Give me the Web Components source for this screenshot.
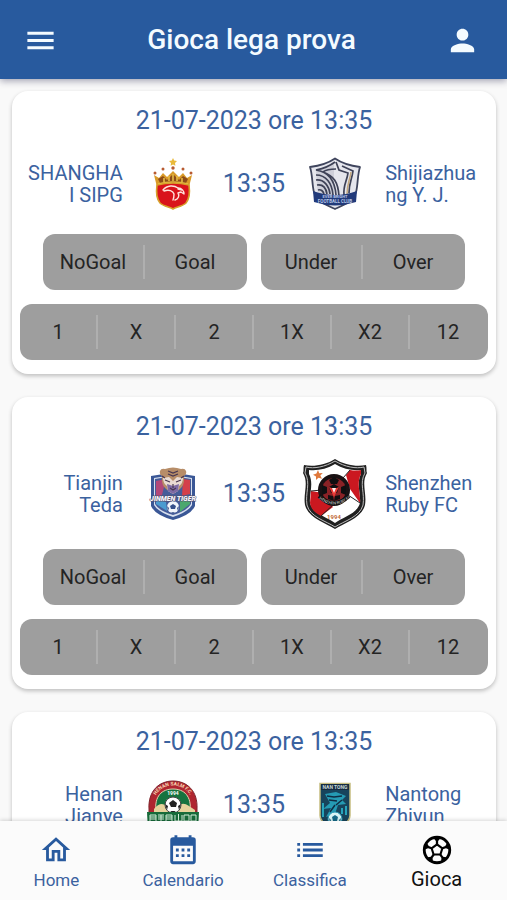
<!DOCTYPE html>
<html lang="it">
<head>
<meta charset="utf-8">
<meta name="viewport" content="width=device-width, initial-scale=1">
<title>Gioca lega prova</title>
<style>
  :root {
    --blue: #285a9e;
    --ink: #3b629f;
    --page: #f9f9f9;
  }
  body {
    margin: 0;
    height: 100vh;
    display: flex;
    flex-direction: column;
    background: var(--page);
    color: var(--ink);
    font-family: Roboto, "Liberation Sans", sans-serif;
  }
  main {
    flex: 1;
    min-height: 0;
    overflow: hidden auto;
    scrollbar-width: none;
    display: flex;
    flex-direction: column;
    gap: 23px;
    padding: 12px 11px 12px 12px;
  }
</style>
</head>
<body>

<app-bar>Gioca lega prova</app-bar>

<main>
  <match-card time="13:35" home="shanghai" away="shijiazhuang">
    <span slot="date">21-07-2023 ore 13:35</span>
    <span slot="home">SHANGHAI SIPG</span>
    <span slot="away">Shijiazhuang Y. J.</span>
  </match-card>
  <match-card time="13:35" home="tianjin" away="shenzhen">
    <span slot="date">21-07-2023 ore 13:35</span>
    <span slot="home">Tianjin Teda</span>
    <span slot="away">Shenzhen Ruby FC</span>
  </match-card>
  <match-card time="13:35" home="henan" away="nantong">
    <span slot="date">21-07-2023 ore 13:35</span>
    <span slot="home">Henan Jianye</span>
    <span slot="away">Nantong Zhiyun</span>
  </match-card>
</main>

<tab-bar>
  <tab-item icon="home">Home</tab-item>
  <tab-item icon="calendar">Calendario</tab-item>
  <tab-item icon="list">Classifica</tab-item>
  <tab-item icon="ball" active>Gioca</tab-item>
</tab-bar>

<script>
const ICONS = {
  menu: '<path d="M3 18h18v-2H3v2zm0-5h18v-2H3v2zm0-7v2h18V6H3z"/>',
  person: '<path d="M12 12c2.21 0 4-1.79 4-4s-1.79-4-4-4-4 1.79-4 4 1.790 4 4 4zm0 2c-2.670 0-8 1.340-8 4v2h16v-2c0-2.660-5.330-4-8-4z"/>',
  home: '<path d="M12 5.690l5 4.500V18h-2v-6H9v6H7v-7.810l5-4.500M12 3L2 12h3v8h6v-6h2v6h6v-8h3L12 3z"/>',
  calendar: '<path fill-rule="evenodd" d="M5 3h1V1.500h2V3h8V1.500h2V3h1a2 2 0 0 1 2 2v15a2 2 0 0 1-2 2H5a2 2 0 0 1-2-2V5a2 2 0 0 1 2-2zM5 9v11h14V9zM7 11h2v2H7zm4 0h2v2h-2zm4 0h2v2h-2zM7 15h2v2H7zm4 0h2v2h-2zm4 0h2v2h-2z"/>',
  list: '<path d="M3 13h2v-2H3v2zm0 4h2v-2H3v2zm0-8h2V7H3v2zm4 4h14v-2H7v2zm0 4h14v-2H7v2zM7 7v2h14V7H7z"/>',
  ball: `<circle cx="12" cy="12" r="9" fill="none" stroke="currentColor" stroke-width="2"/>
    <path fill="none" stroke="currentColor" stroke-width="1.500" stroke-linejoin="round" d="M12 8l3.800 2.800-1.400 4.400H9.600L8.200 10.800z"/>
    ${[0, 72, 144, 216, 288].map(a => `<path transform="rotate(${a} 12 12)" d="M9.300 3.400h5.400L12.800 5.600V8h-1.600V5.600z"/>`).join('')}`
};

const icon = (name, size) =>
  `<svg viewBox="0 0 24 24" width="${size}" height="${size}" fill="currentColor" aria-hidden="true">${ICONS[name]}</svg>`;

// Club crests, each on its own small canvas
const CRESTS = {
  shanghai: { size: 54, art: `
    <path fill="#e9b93a" d="M27 1l1.200 2.500 2.800.4-2 2 .4 2.800-2.400-1.300-2.400 1.300.4-2.800-2-2 2.800-.4z"/>
    <path fill="#d99a28" d="M8 18l5 3 4-5 4 4 6-6 6 6 4-4 4 5 5-3-3 12H11z"/>
    <path fill="#8d4c18" d="M12 22l5-3 4 4 6-6 6 6 4-4 5 3-2 4H14z"/>
    <path fill="none" stroke="#e6bd45" stroke-width="1.600" d="M12 27q15-4 30 0M18 25v-4M23 24v-5M27 24v-7M31 24v-5M36 25v-4"/>
    <g fill="#b85a30"><circle cx="9" cy="16" r="1.500"/><circle cx="17" cy="12" r="1.500"/><circle cx="27" cy="11" r="1.700"/><circle cx="37" cy="12" r="1.500"/><circle cx="45" cy="16" r="1.500"/></g>
    <path fill="#d9131b" stroke="#d7a12c" stroke-width="1.600" d="M11 28q16-4 32 0c1 7 1 13-3 18-3 3-9 4-13 6-4-2-10-3-13-6-4-5-4-11-3-18z"/>
    <path fill="none" stroke="#ffe4dc" stroke-width="1.400" stroke-linecap="round" stroke-linejoin="round" d="M17 33c4-5 11-5 15-2 4 0 6 3 6 6l-3-2-3 1c2 3 0 6-3 7M18 34c5-2 9 0 10 3 0 2 0 4-1 6M32 32l4 1"/>` },
  shijiazhuang: { size: 54, art: `
    <path fill="#e5e6ed" stroke="#3f455d" stroke-width="1.800" stroke-linejoin="round" d="M27 1.500C19 7 10 9 2 10c2 6 2 12 3 20 1 14 13 18 22 22 9-4 21-8 22-22 1-8 1-14 3-20-8-1-17-3-25-8.500z"/>
    <path fill="#cfd0da" d="M8 14l18-8v34H10z"/>
    <g fill="none" stroke="#3e4257" stroke-width="1.700">
      <path d="M27 5c-8 6-14 7-19 8 14 2 19 12 20 25M28 12c-5 0-9 0-13 3 11 4 15 10 16 24"/>
      <path d="M8 18c10 0 16 8 17 20M8 23c8-1 13 6 14 14M9 28c6-1 9 3 10 9M10 33c3-1 5 1 6 4"/>
      <path d="M28 5l3 8 9 3c-1 8-5 12-4 22M34 9l11 5c-1 8-4 12-4 22"/>
    </g>
    <path fill="none" stroke="#c3a77d" stroke-width="1.500" d="M43 15c-1 8-4 12-4 22"/>
    <path fill="#213a7a" d="M5 34q22 8 44 0l-1 11q-21 7-42 0z"/>
    <g fill="#b9c7e8" font-family="Roboto, sans-serif" font-weight="700" text-anchor="middle">
      <text x="27" y="41" font-size="4">EVER BRIGHT</text><text x="27" y="46" font-size="4.500">FOOTBALL CLUB</text>
    </g>` },
  tianjin: { size: 54, art: `
    <path fill="#3a5796" d="M5 9q22-5 44 0v30q-4 9-22 14Q9 48 5 39z"/>
    <path fill="#d8e0ee" d="M8 11q19-4 38 0v27q-4 7-19 12Q12 45 8 38z"/>
    <path fill="#465c99" d="M9 12q18-4 36 0v25q-4 7-18 11-14-4-18-11z"/>
    <path fill="#b24879" d="M10 14l10-2-4 16-6 2z"/>
    <path fill="#d43f4a" d="M37 12l7 1v14l-8 2z"/>
    <path fill="#4ba86e" d="M34 34l10-4v7l-10 8z"/>
    <path fill="#4a9bd0" d="M10 32l10 3 1 9-11-7z"/>
    <path fill="#b78d68" d="M14 4q1-3 5-2 8-3 16 0 4-1 5 2t-2 5q1 9-4 13l-7 5-7-5q-5-4-4-13-3-2-2-5z"/>
    <path fill="#e9dbd3" d="M17 11l6-1 4 4 4-4 6 1q0 5-4 8l-1 5-5 3-5-3-1-5q-4-3-4-8z"/>
    <path fill="#7d6aa4" d="M21 17l6 2 6-2-1 7-5 3-5-3z"/>
    <path fill="none" stroke="#483750" stroke-width="1.200" d="M22 4l5 2 5-2M22 7l5 2 5-2M19 13l5 2M35 13l-5 2M16 9l3 2M38 9l-3 2M24 21l3 2 3-2M27 17v4"/>
    <circle cx="27" cy="40" r="6" fill="#f2f5fb"/>
    <path fill="#354e89" d="M27 37l3 2-1 3h-4l-1-3zM21 39l2 2-1 3zM33 39l-2 2 1 3zM25 45h4l-2 1z"/>
    <text x="27" y="34" fill="#f5f5fa" stroke="#57516d" stroke-width="1" paint-order="stroke" font-family="Roboto, sans-serif" font-size="7" font-style="italic" font-weight="900" text-anchor="middle">JINMEN TIGER</text>` },
  shenzhen: { size: 70, art: `
    <path fill="#202020" d="M35 0C26 6 13 8 4 6 3 9 4 12 3 14c6 10 0 20 2 32 3 13 21 18 30 24 9-6 27-11 30-24 2-12-4-22 2-32-1-2 0-5-1-8-9 2-22 0-31-6z"/>
    <path fill="none" stroke="#bdbdbd" stroke-width="1" d="M35 2C25 8 14 10 6 8l-1 6c6 10 0 20 2 32 3 12 19 16 28 22 9-6 25-10 28-22 2-12-4-22 2-32l-1-6C56 10 45 8 35 2z"/>
    <path fill="#fff" d="M35 5C27 10 17 12 9 11v4c5 10 0 20 1 29 3 11 17 14 25 20 8-6 22-9 25-20 1-9-4-19 1-29v-4c-8 1-18-1-26-6z"/>
    <path fill="#cb1820" d="M50 11q6 1 11 0v4c-5 10 0 20-1 29L50 30 46 16zM11 32l12 2 10 14-12 9c-6-3-10-7-11-13z"/>
    <path fill="none" stroke="#222" d="M50 11l-7 8M11 32l11-1M60 44L48 36M21 57l13-12"/>
    <circle cx="34" cy="31" r="16" fill="#191113"/>
    <circle cx="34" cy="31" r="12" fill="#8a2226"/>
    <path fill="#100f11" d="M34 18l5 3-2 4h-6l-2-4zM22 26l5 2v6l-5 2zM46 26l-5 2v6l5 2zM28 36l5 1 1 5-6-2zM40 36l-5 1-1 5 6-2zM29 28l5-3 5 3-2 6h-6z"/>
    <path fill="#e93a35" d="M29 28l5 2 5-2-2 4-3 6-3-6z"/>
    <path fill="#fff0ef" d="M32 29h4l-2 5z"/>
    <path fill="none" stroke="#111" stroke-width="4" d="M19 37q15 14 30 0"/>
    <path id="band" fill="none" d="M18 39q16 13 32 0"/>
    <path fill="#df783c" d="M18 11l1.200 3.300 3.600-.3-2.500 2.500 1.700 3.200-3.500-1-2.500 2.300v-3.400l-3-1.800 3.400-1.300z"/>
    <text fill="#ddd" font-family="Roboto, sans-serif" font-size="4"><textPath href="#band" startOffset="50%" text-anchor="middle">SHENZHEN RUBY FC</textPath></text>
    <text x="34" y="60" fill="#bf6c3c" font-family="Roboto, sans-serif" font-size="6" font-weight="700" text-anchor="middle">1994</text>` },
  henan: { size: 54, art: `
    <path fill="#af2630" stroke="#7e272e" d="M3 31C2 13 13 3 27 3s25 10 24 28v6H3z"/>
    <path fill="#16733f" stroke="#e8cfb0" stroke-width="1" d="M10 34C8 18 16 11 27 11s19 7 17 23z"/>
    <path fill="#e6d39c" d="M8 31q7-9 14-2h9q5-6 12-1l6 4v4H8z"/>
    <circle cx="27" cy="27" r="8" fill="#fff" stroke="#444"/>
    <path fill="#222" d="M27 22l4 3-1 4h-5l-2-4zM19 26l3 2-1 4zM35 26l-3 2 1 4zM24 33h6l-3 2z"/>
    <path fill="#176b3a" d="M1 34h52l-1 19H2z"/>
    <path id="arc" fill="none" d="M7 27C9 1 45 1 47 27"/>
    <text fill="#f6d6b2" font-family="Roboto, sans-serif" font-size="5" font-weight="700"><textPath href="#arc" startOffset="50%" text-anchor="middle">HENAN SALM F.C.</textPath></text>
    <text x="27" y="17" fill="#fff" font-family="Roboto, sans-serif" font-size="5" font-weight="700" text-anchor="middle">1994</text>
    <path fill="none" stroke="#d4efd9" stroke-width="1" d="M4 37h6v7H4zm0 2h6m-6 2h6M12 37h6m-6 2h6m-6 2h6m-3-4v7M20 37h6v7h-6zm0 2h6m-6 2h6M29 37v6h7v-6m-3.500-1v7M38 37h5v6h-5zM45 37h5v6h-5z"/>` },
  nantong: { size: 54, art: `
    <path fill="#17445c" stroke="#c6bd80" stroke-width="1.500" d="M12 5.500h30v32c0 7-8 11-15 14-7-3-15-7-15-14z"/>
    <path fill="#172c41" d="M13 6h28v6H13z"/>
    <path fill="#259bb4" d="M17 16l11-2 10 4-4 4 4 4-8 1-3 9-9 3 5-9-8 1 7-6z"/>
    <path fill="none" stroke="#102d43" stroke-width="1.500" d="M19 18l7 1 8-1M21 22l8 1M34 22l-6 5M27 27l-5 7"/>
    <path fill="none" stroke="#27a4bb" stroke-width="2" d="M15 25v14M38 28v9M34 30v6"/>
    <circle cx="27" cy="41" r="7" fill="#d9f4f5" stroke="#2496b2"/>
    <path fill="#176a88" d="M27 37l3 2-1 4h-4l-1-4zM21 40l2 2-1 3zM33 40l-2 2 1 3z"/>
    <text x="27" y="11" fill="#c8d8d8" font-family="Roboto, sans-serif" font-size="5" font-weight="700" text-anchor="middle">NAN TONG</text>` }
};

class AppBar extends HTMLElement {
  constructor() {
    super();
    this.attachShadow({ mode: 'open' }).innerHTML = `
      <style>
        :host {
          display: block;
          position: relative;
          z-index: 1;
          background: var(--blue);
          color: #f4fbff;
          box-shadow: 0 2px 7px rgba(30, 30, 70, .4);
        }
        header {
          display: grid;
          grid-template-columns: 1fr auto 1fr;
          align-items: center;
          padding: 22px 27px 21px 23px;
        }
        h1 { margin: 0; font-size: 28px; font-weight: 500; line-height: 36px; text-align: center; }
        button {
          display: flex;
          justify-self: start;
          padding: 0;
          border: 0;
          background: none;
          color: inherit;
        }
        h1 + button { justify-self: end; }
      </style>
      <header>
        <button type="button" aria-label="Menu">${icon('menu', 35)}</button>
        <h1><slot></slot></h1>
        <button type="button" aria-label="Profilo">${icon('person', 35)}</button>
      </header>
    `;
  }
}

class ClubCrest extends HTMLElement {
  connectedCallback() {
    const { size, art } = CRESTS[this.getAttribute('club')];
    if (!this.shadowRoot) this.attachShadow({ mode: 'open' });
    this.shadowRoot.innerHTML = `
      <style>
        :host { display: flex; justify-content: center; }
      </style>
      <svg viewBox="0 0 ${size} ${size}" width="${size}" height="${size}" aria-hidden="true">${art}</svg>
    `;
  }
}

// Row of toggles sharing one grey pill; only one can be pressed
class PickGroup extends HTMLElement {
  connectedCallback() {
    const options = this.getAttribute('options').split(',');
    if (!this.shadowRoot) this.attachShadow({ mode: 'open' });
    this.shadowRoot.innerHTML = `
      <style>
        :host {
          display: flex;
          flex: 1;
          height: 56px;
          border-radius: 12px;
          background: #9e9e9e;
          overflow: hidden;
        }
        button {
          flex: 1 1 0;
          min-width: 0;
          display: flex;
          align-items: center;
          padding: 0;
          border: 0;
          background: none;
          color: #242424;
          font: 400 20px/24px Roboto, "Liberation Sans", sans-serif;
        }
        span { flex: 1; line-height: 34px; border-right: 2px solid #afafaf; }
        button:last-child span { border-color: transparent; }
        button[aria-pressed="true"] { background: var(--blue); color: #fff; }
      </style>
      ${options.map(o => `<button type="button" aria-pressed="false"><span>${o}</span></button>`).join('')}
    `;
    const buttons = this.shadowRoot.querySelectorAll('button');
    buttons.forEach(b => b.addEventListener('click', () => {
      buttons.forEach(other => other.setAttribute('aria-pressed', String(other === b)));
    }));
  }
}

class MatchCard extends HTMLElement {
  connectedCallback() {
    if (!this.shadowRoot) this.attachShadow({ mode: 'open' });
    this.shadowRoot.innerHTML = `
      <style>
        :host {
          display: block;
          flex: none;
          padding: 15px 8px 14px;
          border-radius: 16px;
          background: #fff;
          box-shadow: 0 2px 4px rgba(0, 0, 0, .24);
        }
        h2 {
          margin: 0 0 17px;
          font-size: 25px;
          font-weight: 400;
          line-height: 30px;
          text-align: center;
        }
        .teams {
          display: grid;
          grid-template-columns: minmax(0, 1fr) 100px auto 100px minmax(0, 1fr);
          align-items: center;
          min-height: 61px;
          padding: 0 6px;
          margin-bottom: 20px;
        }
        .team { font-size: 20px; line-height: 22px; overflow-wrap: anywhere; }
        .home { text-align: right; }
        time { font-size: 25px; line-height: 30px; }
        .picks { display: flex; gap: 14px; padding: 0 23px; margin-bottom: 14px; }
      </style>
      <h2><slot name="date"></slot></h2>
      <div class="teams">
        <div class="team home"><slot name="home"></slot></div>
        <club-crest club="${this.getAttribute('home')}"></club-crest>
        <time>${this.getAttribute('time')}</time>
        <club-crest club="${this.getAttribute('away')}"></club-crest>
        <div class="team"><slot name="away"></slot></div>
      </div>
      <div class="picks">
        <pick-group options="NoGoal,Goal"></pick-group>
        <pick-group options="Under,Over"></pick-group>
      </div>
      <pick-group options="1,X,2,1X,X2,12"></pick-group>
    `;
  }
}

class TabBar extends HTMLElement {
  constructor() {
    super();
    this.attachShadow({ mode: 'open' }).innerHTML = `
      <style>
        :host {
          display: block;
          position: relative;
          z-index: 1;
          background: #fbfbfb;
          box-shadow: 0 -1px 4px rgba(0, 0, 0, .16);
        }
        nav { display: flex; height: 79px; }
      </style>
      <nav><slot></slot></nav>
    `;
  }
}

class TabItem extends HTMLElement {
  connectedCallback() {
    if (!this.shadowRoot) this.attachShadow({ mode: 'open' });
    this.shadowRoot.innerHTML = `
      <style>
        :host {
          display: block;
          flex: 1 1 0;
          box-sizing: border-box;
          padding: 12px 14px 0 0;
          color: var(--ink);
        }
        :host([active]) { color: #111; }
        a {
          display: flex;
          flex-direction: column;
          align-items: center;
          color: inherit;
          font-size: 17px;
          line-height: 26px;
          text-decoration: none;
        }
        :host([active]) a { font-size: 20px; line-height: 24px; }
        svg { color: var(--blue); }
        :host([active]) svg { color: #000; }
      </style>
      <a href="#${this.getAttribute('icon')}">${icon(this.getAttribute('icon'), 34)}<span><slot></slot></span></a>
    `;
  }
}

customElements.define('app-bar', AppBar);
customElements.define('club-crest', ClubCrest);
customElements.define('pick-group', PickGroup);
customElements.define('match-card', MatchCard);
customElements.define('tab-bar', TabBar);
customElements.define('tab-item', TabItem);
</script>
</body>
</html>
